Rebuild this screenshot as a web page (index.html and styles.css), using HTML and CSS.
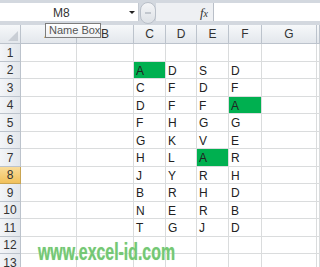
FILE: index.html
```html
<!doctype html>
<html>
<head>
<meta charset="utf-8">
<title>Name Box</title>
<link rel="stylesheet" href="styles.css">
</head>
<body>
<div id="app">
	<div class="topbar">
		<div class="namebox">
			<span class="ref">M8</span>
			<span class="drop"></span>
		</div>
		<div class="knob"><span></span></div>
		<div class="fx">f<i>x</i></div>
		<div class="formula"></div>
	</div>
	<div class="sheet">
		<div class="row head">
			<div class="corner"><span></span></div><div>A</div><div>B</div><div>C</div><div>D</div><div>E</div><div>F</div><div>G</div><div></div>
		</div>
		<div class="row"><div class="num">1</div><div></div><div></div><div></div><div></div><div></div><div></div><div></div><div></div></div>
		<div class="row"><div class="num">2</div><div></div><div></div><div class="hit">A</div><div>D</div><div>S</div><div>D</div><div></div><div></div></div>
		<div class="row"><div class="num">3</div><div></div><div></div><div>C</div><div>F</div><div>D</div><div>F</div><div></div><div></div></div>
		<div class="row"><div class="num">4</div><div></div><div></div><div>D</div><div>F</div><div>F</div><div class="hit">A</div><div></div><div></div></div>
		<div class="row"><div class="num">5</div><div></div><div></div><div>F</div><div>H</div><div>G</div><div>G</div><div></div><div></div></div>
		<div class="row"><div class="num">6</div><div></div><div></div><div>G</div><div>K</div><div>V</div><div>E</div><div></div><div></div></div>
		<div class="row"><div class="num">7</div><div></div><div></div><div>H</div><div>L</div><div class="hit">A</div><div>R</div><div></div><div></div></div>
		<div class="row"><div class="num active">8</div><div></div><div></div><div>J</div><div>Y</div><div>R</div><div>H</div><div></div><div></div></div>
		<div class="row"><div class="num">9</div><div></div><div></div><div>B</div><div>R</div><div>H</div><div>D</div><div></div><div></div></div>
		<div class="row"><div class="num">10</div><div></div><div></div><div>N</div><div>E</div><div>R</div><div>B</div><div></div><div></div></div>
		<div class="row"><div class="num">11</div><div></div><div></div><div>T</div><div>G</div><div>J</div><div>D</div><div></div><div></div></div>
		<div class="row"><div class="num">12</div><div></div><div></div><div></div><div></div><div></div><div></div><div></div><div></div></div>
		<div class="row"><div class="num">13</div><div></div><div></div><div></div><div></div><div></div><div></div><div></div><div></div></div>
	</div>
	<div class="tip">Name Box</div>
	<div class="mark">www.excel-id.com</div>
</div>
</body>
</html>
```
FILE: styles.css
```css
*{margin:0;padding:0;box-sizing:border-box}
body{width:320px;height:267px;overflow:hidden;background:#fff;font-family:"Liberation Sans",Arial,sans-serif;color:#222}
#app{position:relative;width:320px;height:267px;overflow:hidden}

.topbar{display:flex;height:25px;padding:3px 0 4px;background:#d3d8df}
.namebox{position:relative;width:139px;background:#fff;border-right:1px solid #c3c9d1}
.namebox .ref{position:absolute;left:53px;top:3px;font-size:12px;color:#333}
.namebox .drop{position:absolute;left:129px;top:8px;border:3px solid transparent;border-top:3px solid #222}
.knob{width:16px;margin:-1px 0 -3px 1px;border:1px solid #b9bfc8;border-radius:8px;background:linear-gradient(#f4f5f7,#dde1e6);display:flex;align-items:center;justify-content:center}
.knob span{width:6px;height:2px;background:#c2c7ce}
.fx{width:57px;background:#eef0f3;text-align:right;padding:2px 5px 0 0;font-family:"Liberation Serif",serif;font-style:italic;font-size:13px;color:#333}
.fx i{font-size:10px}
.formula{flex:1;background:#fff;border-left:1px solid #b9bfc8}

.row{display:grid;grid-template-columns:21px 56px 57px 32px 31px 32px 33px 55px 3px;height:18px}
.row:nth-child(odd){height:17px}
.row div{border-right:1px solid #dadcdd;border-bottom:1px solid #dadcdd;font-size:12px;line-height:14px;padding:1px 0 0 2px;display:flex;align-items:center}
.row .hit{background:#00b050}
.row.head{height:19px}
.row.head div{background:linear-gradient(#f6f8fa,#e3e7ec);border-color:#bcc3cc;justify-content:center;padding:0;color:#333}
.row .num{background:linear-gradient(90deg,#f3f5f8,#e3e7ec);border-color:#bcc3cc;justify-content:center;padding:0;color:#333}
.row .num.active{background:linear-gradient(#f9dc9a,#f1c15b);border-color:#c9a552}
.row.head .corner{position:relative}
.corner span{position:absolute;right:2px;bottom:2px;border-left:10px solid transparent;border-bottom:10px solid #c9ced5}

.tip{position:absolute;left:45px;top:23px;width:56px;height:15px;background:linear-gradient(#ffffff,#eef0f3);border:1px solid #7d7d7d;font-size:11px;line-height:13px;color:#555;padding-left:3px;white-space:nowrap}

.mark{position:absolute;left:38px;top:239px;font-size:23px;font-weight:bold;color:#74c874;white-space:nowrap;transform:scaleX(0.69);transform-origin:left top;text-shadow:0 0 1px #b8e4b8}
```
